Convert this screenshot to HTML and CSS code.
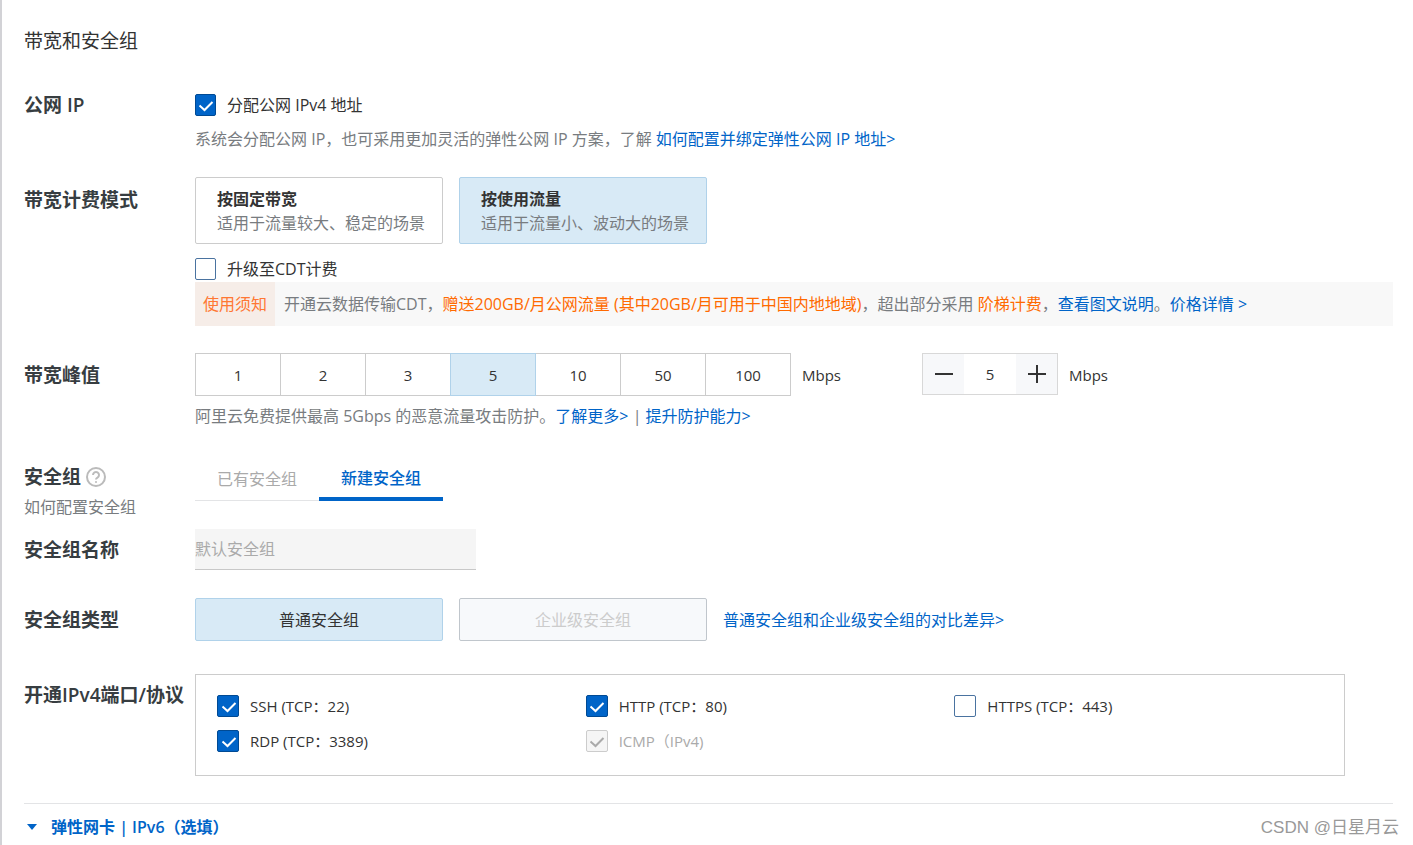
FILE: index.html
```html
<!DOCTYPE html>
<html lang="zh-CN">
<head>
<meta charset="utf-8">
<title>带宽和安全组</title>
<link rel="stylesheet" href="styles.css">
</head>
<body>
<main class="panel">
  <h1 class="panel-title">带宽和安全组</h1>

  <section class="row row-ip">
    <h2 class="row-label">公网 IP</h2>
    <div class="row-body">
      <label class="check"><input type="checkbox" checked>分配公网 IPv4 地址</label>
      <p class="hint">系统会分配公网 IP，也可采用更加灵活的弹性公网 IP 方案，了解 <a href="#">如何配置并绑定弹性公网 IP 地址&gt;</a></p>
    </div>
  </section>

  <section class="row row-billing">
    <h2 class="row-label">带宽计费模式</h2>
    <div class="row-body">
      <div class="options">
        <button type="button" class="option card" aria-pressed="false"><strong>按固定带宽</strong><span>适用于流量较大、稳定的场景</span></button>
        <button type="button" class="option card selected" aria-pressed="true"><strong>按使用流量</strong><span>适用于流量小、波动大的场景</span></button>
      </div>
      <label class="check cdt"><input type="checkbox">升级至CDT计费</label>
      <div class="notice">
        <span class="notice-tag">使用须知</span>
        <p class="notice-text">开通云数据传输CDT，<em>赠送200GB/月公网流量 (其中20GB/月可用于中国内地地域)</em>，超出部分采用 <em>阶梯计费</em>，<a href="#">查看图文说明</a>。<a href="#">价格详情 &gt;</a></p>
      </div>
    </div>
  </section>

  <section class="row row-peak">
    <h2 class="row-label">带宽峰值</h2>
    <div class="row-body">
      <div class="peak">
        <div class="segments">
          <button type="button">1</button>
          <button type="button">2</button>
          <button type="button">3</button>
          <button type="button" class="selected">5</button>
          <button type="button">10</button>
          <button type="button">50</button>
          <button type="button">100</button>
        </div>
        <span class="unit">Mbps</span>
        <div class="stepper">
          <button type="button" aria-label="减少"><svg width="20" height="20" viewBox="0 0 20 20"><path d="M1 10H19"/></svg></button>
          <input type="text" value="5" aria-label="带宽峰值">
          <button type="button" aria-label="增加"><svg width="20" height="20" viewBox="0 0 20 20"><path d="M1 10H19M10 1V19"/></svg></button>
        </div>
        <span class="unit">Mbps</span>
      </div>
      <p class="hint">阿里云免费提供最高 5Gbps 的恶意流量攻击防护。<a href="#">了解更多&gt;</a> | <a href="#">提升防护能力&gt;</a></p>
    </div>
  </section>

  <section class="row row-group">
    <div>
      <h2 class="row-label with-icon">安全组
        <svg class="help" width="20" height="20" viewBox="0 0 20 20"><circle cx="10" cy="10" r="9"/><path d="M7 8a3 3 0 1 1 4.500 2.600Q10 11.500 10 12.600M10 14.200V15.800"/></svg>
      </h2>
      <a class="sub-link" href="#">如何配置安全组</a>
    </div>
    <div class="row-body">
      <div class="tabs" role="tablist">
        <button type="button" role="tab" aria-selected="false">已有安全组</button>
        <button type="button" role="tab" aria-selected="true" class="active">新建安全组</button>
      </div>
    </div>
  </section>

  <section class="row row-name">
    <label class="row-label" for="group-name">安全组名称</label>
    <div class="row-body">
      <input class="name-input" id="group-name" type="text" placeholder="默认安全组" disabled>
    </div>
  </section>

  <section class="row row-type">
    <h2 class="row-label">安全组类型</h2>
    <div class="row-body options">
      <button type="button" class="option selected">普通安全组</button>
      <button type="button" class="option" disabled>企业级安全组</button>
      <a href="#">普通安全组和企业级安全组的对比差异&gt;</a>
    </div>
  </section>

  <section class="row row-ports">
    <h2 class="row-label">开通IPv4端口/协议</h2>
    <div class="row-body ports">
      <label class="check"><input type="checkbox" checked>SSH (TCP：22)</label>
      <label class="check"><input type="checkbox" checked>HTTP (TCP：80)</label>
      <label class="check"><input type="checkbox">HTTPS (TCP：443)</label>
      <label class="check"><input type="checkbox" checked>RDP (TCP：3389)</label>
      <label class="check off"><input type="checkbox" checked disabled>ICMP（IPv4)</label>
    </div>
  </section>

  <footer class="panel-footer">
    <button type="button" class="expand"><svg width="10" height="6" viewBox="0 0 10 6"><path d="M0 0H10L5 6Z"/></svg>弹性网卡 | IPv6（选填）</button>
    <span class="watermark">CSDN @日星月云</span>
  </footer>
</main>
</body>
</html>
```

FILE: styles.css
```css
* {
  box-sizing: border-box;
}

body {
  margin: 0;
  background: #fff;
  color: #333;
  font-family: "Open Sans", "Noto Sans CJK SC", sans-serif;
  font-size: 16px;
  line-height: 24px;
}

h1,
h2,
p {
  margin: 0;
}

button,
input {
  margin: 0;
  padding: 0;
  border: 0;
  border-radius: 0;
  background: none;
  color: inherit;
  font: inherit;
}

a {
  color: #0064c8;
  text-decoration: none;
}

.panel {
  min-height: 100vh;
  padding: 27px 20px 0 22px;
  border-left: 2px solid #d2d2d6;
}

.panel-title {
  font-size: 19px;
  font-weight: 400;
  line-height: 28px;
}

.row {
  display: grid;
  grid-template-columns: 171px 1fr;
}

.row-label {
  color: #373d41;
  font-size: 19px;
  font-weight: 600;
  line-height: 28px;
  white-space: nowrap;
}

.row-ip {
  margin-top: 36px;
}

.row-ip .row-body {
  padding-top: 2px;
}

.row-ip .hint {
  margin-top: 10px;
}

.hint {
  color: #787c80;
}

.check {
  display: flex;
  align-items: center;
  gap: 11px;
}

.check input {
  appearance: none;
  flex: none;
  width: 21px;
  height: 22px;
  border: 1px solid #4a73a0;
  border-radius: 2px;
  background: #fff center / 19px 20px no-repeat;
}

.check input:checked {
  border-color: #004a94;
  background-color: #0064c8;
  background-image: url("data:image/svg+xml,%3Csvg xmlns='http://www.w3.org/2000/svg' viewBox='0 0 19 20'%3E%3Cpath d='M3.500 10.500L8.500 15L16.500 7' fill='none' stroke='white' stroke-width='2'/%3E%3C/svg%3E");
}

.check input:disabled {
  border-color: #ccc;
  background-color: #f5f5f5;
  background-image: url("data:image/svg+xml,%3Csvg xmlns='http://www.w3.org/2000/svg' viewBox='0 0 19 20'%3E%3Cpath d='M3.500 10.500L8.500 15L16.500 7' fill='none' stroke='%23aaa' stroke-width='2'/%3E%3C/svg%3E");
}

.check.off {
  color: #aaa;
}

.row-billing {
  margin-top: 26px;
}

.row-billing .row-label {
  padding-top: 9px;
}

.options {
  display: flex;
  align-items: center;
  gap: 16px;
}

.option {
  width: 248px;
  height: 43px;
  border: 1px solid #ccc;
  border-radius: 2px;
}

.option.selected {
  border-color: #b0d2ea;
  background: #d8eaf6;
}

.option:disabled {
  border-color: #c0c6cc;
  background: #f7f9fb;
  color: #ccc;
}

.card {
  display: flex;
  flex-direction: column;
  height: 67px;
  padding: 9px 0 0 21px;
  text-align: left;
}

.card strong {
  font-weight: 600;
}

.card span {
  color: #787c80;
  white-space: nowrap;
}

.cdt {
  margin: 13px 0 1px;
}

.notice {
  display: flex;
  background: #f8f8f8;
  line-height: 44px;
}

.notice-tag {
  padding: 0 8px;
  background: #f6ede8;
  color: #ff7733;
}

.notice-text {
  padding-left: 9px;
  color: #787c80;
}

.notice-text em {
  color: #ff6a00;
  font-style: normal;
}

.row-peak {
  margin-top: 27px;
}

.row-peak .row-label {
  padding-top: 8px;
}

.row-peak .hint {
  margin-top: 8px;
}

.peak {
  display: flex;
  align-items: center;
  font-size: 15px;
}

.segments {
  display: flex;
}

.segments button {
  width: 86px;
  height: 43px;
  border: 1px solid #ccc;
}

.segments button + button {
  margin-left: -1px;
}

.segments .selected {
  z-index: 1;
  border-color: #b0d2ea;
  background: #d8eaf6;
}

.unit {
  padding-left: 11px;
}

.stepper {
  display: flex;
  align-self: flex-start;
  height: 42px;
  margin-left: 81px;
  border: 1px solid #d8d8d8;
}

.stepper button {
  display: grid;
  place-items: center;
  width: 41px;
  background: #f7f8fa;
}

.stepper input {
  width: 52px;
  text-align: center;
}

.stepper path {
  stroke: #333;
  stroke-width: 2;
}

.row-group {
  margin-top: 29px;
}

.row-group .with-icon {
  display: flex;
  align-items: center;
  gap: 5px;
  padding-top: 6px;
}

.help {
  fill: none;
  stroke: #bbb;
  stroke-width: 2;
}

.sub-link {
  display: block;
  padding-top: 4px;
  color: #787c80;
}

.tabs {
  display: flex;
  height: 44px;
}

.tabs button {
  width: 124px;
  border-bottom: 1px solid #e3e4e6;
  color: #aaa;
}

.tabs .active {
  padding-top: 2px;
  border-bottom: 4px solid #0064c8;
  color: #0064c8;
  font-weight: 500;
}

.row-name {
  margin-top: 10px;
}

.row-name .row-label {
  padding-top: 7px;
}

.name-input {
  width: 281px;
  height: 41px;
  border-bottom: 1px solid #c8c8c8;
  background: #f5f5f5;
}

.name-input::placeholder {
  color: #aaa;
}

.row-type {
  margin-top: 28px;
}

.row-type .row-label {
  padding-top: 8px;
}

.row-ports {
  margin-top: 33px;
}

.row-ports .row-label {
  padding-top: 7px;
}

.ports {
  display: grid;
  grid-template-columns: repeat(3, 1fr);
  row-gap: 11px;
  margin-right: 48px;
  padding: 19px 21px 22px;
  border: 1px solid #ccc;
  font-size: 15px;
}

.ports .check input {
  width: 22px;
}

.panel-footer {
  display: flex;
  align-items: center;
  justify-content: space-between;
  margin-top: 27px;
  padding-top: 10px;
  border-top: 1px solid #e3e4e6;
}

.expand {
  display: flex;
  align-items: center;
  gap: 14px;
  padding-left: 3px;
  color: #0064c8;
  font-weight: 600;
}

.expand svg {
  fill: #0064c8;
}

.watermark {
  margin-right: -6px;
  padding-top: 2px;
  color: #999;
  font-family: "Liberation Sans", "Noto Sans CJK SC", sans-serif;
  font-size: 17px;
}
```
